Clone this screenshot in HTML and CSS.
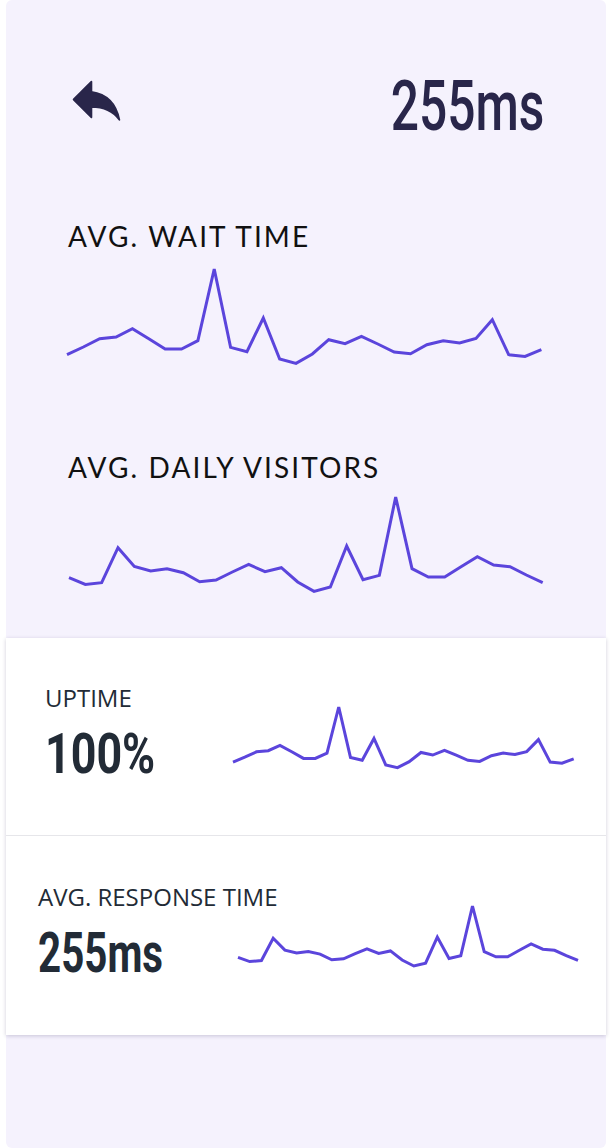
FILE: index.html
```html
<!DOCTYPE html>
<html lang="en">
<head>
<meta charset="utf-8">
<title>Metrics</title>
<link rel="stylesheet" href="styles.css">
</head>
<body>
<div class="panel">
  <header class="top">
    <svg class="back" viewBox="0 0 24 24" aria-label="Back">
      <path d="M10 9V5l-7 7 7 7v-4.1c5 0 8.5 1.6 11 5.1-1-5-4-10-11-11z"/>
    </svg>
    <div class="headline"><span class="num num--head">255ms</span></div>
  </header>

  <section class="metric metric--wait">
    <h2 class="metric-title">AVG. WAIT TIME</h2>
    <svg class="spark spark--wait" viewBox="0 0 29 94.4" preserveAspectRatio="none">
      <polyline points="0,85.7 1,78 2,69.7 3,68 4,59.7 5,69.7 6,80 7,80 8,71.7 9,0 10,78.4 11,82.7 12,49 13,90 14,94.4 15,85 16,70.7 17,74.7 18,67.4 19,75 20,83 21,84.7 22,75.7 23,71.7 24,74 25,69.4 26,50.7 27,85.7 28,87.4 29,80.7"/>
    </svg>
  </section>

  <section class="metric metric--visitors">
    <h2 class="metric-title">AVG. DAILY VISITORS</h2>
    <svg class="spark spark--visitors" viewBox="0 0 29 94.4" preserveAspectRatio="none">
      <polyline transform="translate(29 0) scale(-1 1)" points="0,85.7 1,78 2,69.7 3,68 4,59.7 5,69.7 6,80 7,80 8,71.7 9,0 10,78.4 11,82.7 12,49 13,90 14,94.4 15,85 16,70.7 17,74.7 18,67.4 19,75 20,83 21,84.7 22,75.7 23,71.7 24,74 25,69.4 26,50.7 27,85.7 28,87.4 29,80.7"/>
    </svg>
  </section>

  <div class="card">
    <div class="stat stat--uptime">
      <div class="stat-text">
        <div class="stat-label">UPTIME</div>
        <div class="stat-value"><span class="num num--value num--pct">100%</span></div>
      </div>
      <svg class="spark spark--uptime" viewBox="0 0 29 94.4" preserveAspectRatio="none">
        <polyline points="0,85.7 1,78 2,69.7 3,68 4,59.7 5,69.7 6,80 7,80 8,71.7 9,0 10,78.4 11,82.7 12,49 13,90 14,94.4 15,85 16,70.7 17,74.7 18,67.4 19,75 20,83 21,84.7 22,75.7 23,71.7 24,74 25,69.4 26,50.7 27,85.7 28,87.4 29,80.7"/>
      </svg>
    </div>
    <div class="stat stat--response">
      <div class="stat-text">
        <div class="stat-label">AVG. RESPONSE TIME</div>
        <div class="stat-value"><span class="num num--value">255ms</span></div>
      </div>
      <svg class="spark spark--response" viewBox="0 0 29 94.4" preserveAspectRatio="none">
        <polyline transform="translate(29 0) scale(-1 1)" points="0,85.7 1,78 2,69.7 3,68 4,59.7 5,69.7 6,80 7,80 8,71.7 9,0 10,78.4 11,82.7 12,49 13,90 14,94.4 15,85 16,70.7 17,74.7 18,67.4 19,75 20,83 21,84.7 22,75.7 23,71.7 24,74 25,69.4 26,50.7 27,85.7 28,87.4 29,80.7"/>
      </svg>
    </div>
  </div>
</div>
</body>
</html>
```

FILE: styles.css
```css
html, body {
  margin: 0;
  padding: 0;
  background: #ffffff;
}

.panel {
  width: 600px;
  height: 1148px;
  margin: 0 6px;
  background: #f5f2fd;
  border-radius: 6px;
  display: flex;
  flex-direction: column;
}

.top {
  height: 160px;
  display: flex;
  justify-content: space-between;
  align-items: flex-start;
  padding: 0 62px 0 60px;
}

.back {
  width: 61px;
  height: 61px;
  margin-top: 69px;
  fill: #29264a;
  stroke: #29264a;
  stroke-width: 0.7;
  stroke-linejoin: round;
}

.headline {
  margin-top: 70px;
  font-size: 71px;
  line-height: 1;
  color: #29264a;
}

.num {
  display: inline-block;
  font-family: Roboto, "Liberation Sans", sans-serif;
  white-space: nowrap;
}

.num--head {
  font-weight: 500;
  transform: scaleX(0.7);
  transform-origin: right center;
}

.num--value {
  font-weight: 700;
  transform: scaleX(0.72);
  transform-origin: left center;
}

.num--pct {
  transform: scaleX(0.8);
}

.metric {
  display: flex;
  flex-direction: column;
  padding-left: 62px;
}

.metric--wait {
  margin-top: 62px;
}

.metric--visitors {
  margin-top: 89.6px;
}

.metric-title {
  margin: 0;
  font-family: Lato, "Open Sans", sans-serif;
  font-weight: 400;
  font-size: 28px;
  line-height: 1;
  letter-spacing: 2.1px;
  color: #111111;
}

.spark {
  display: block;
  flex-shrink: 0;
  overflow: visible;
}

.spark polyline {
  fill: none;
  stroke: #5b45dc;
  stroke-width: 3;
  vector-effect: non-scaling-stroke;
}

.spark--wait {
  width: 474.4px;
  height: 94.4px;
  margin-top: 19px;
  margin-left: -0.7px;
}

.spark--visitors {
  width: 473.7px;
  height: 94.4px;
  margin-top: 16.1px;
  margin-left: 1.3px;
}

.card {
  margin-top: 47px;
  background: #ffffff;
  box-shadow: 0 1px 4px rgba(40, 30, 80, 0.22);
  display: flex;
  flex-direction: column;
}

.stat {
  display: flex;
  justify-content: space-between;
  align-items: center;
}

.stat--uptime {
  height: 197px;
  border-bottom: 1px solid #e6e6ea;
  padding: 0 32px 0 39px;
}

.stat--response {
  height: 199px;
  padding: 0 28px 0 32px;
}

.stat-text {
  width: 150px;
  flex-shrink: 0;
  white-space: nowrap;
  margin-bottom: 8px;
}

.stat-label {
  font-family: "Open Sans", sans-serif;
  font-size: 24px;
  line-height: 28.8px;
  color: #222b36;
}

.stat-value {
  margin-top: 13px;
  font-size: 56px;
  line-height: 1;
  color: #222b36;
}

.spark--uptime {
  width: 340.7px;
  height: 60.7px;
}

.spark--response {
  width: 340px;
  height: 60px;
}
```
